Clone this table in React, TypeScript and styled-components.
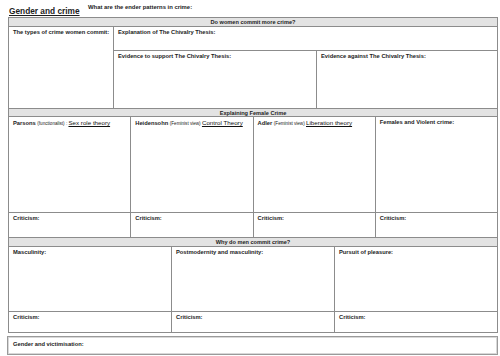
import * as React from 'react';
import styled, { createGlobalStyle } from 'styled-components';

const GlobalStyle = createGlobalStyle`
  html, body {
    margin: 0;
    padding: 0;
    background: #fff;
  }
  body {
    font-family: "Liberation Sans", Arial, sans-serif;
    color: #222;
  }
`;

const Page = styled.div`
  width: 500px;
  height: 356px;
  overflow: hidden;
  background: #fff;
`;

const TopBar = styled.header`
  display: flex;
  align-items: flex-start;
  height: 17px;
`;

const Title = styled.h1`
  margin: 0;
  padding: 7px 0 0 9px;
  width: 79px;
  font-size: 8.3px;
  line-height: 9px;
  font-weight: 700;
  text-decoration: underline;
  color: #1c1c1c;
  white-space: nowrap;
`;

const Prompt = styled.p`
  margin: 0;
  padding: 4px 0 0 0;
  font-size: 5.9px;
  line-height: 6px;
  font-weight: 700;
  color: #222;
  white-space: nowrap;
`;

const Sheet = styled.main`
  margin-left: 8px;
  width: 490px;
  box-sizing: border-box;
  border: 1px solid #8c8c8c;
  background: #8c8c8c;
  display: flex;
  flex-direction: column;
  gap: 1px;
`;

const Band = styled.div<{ $h: number }>`
  height: ${(p) => p.$h}px;
  background: #e3e3e3;
  display: flex;
  align-items: center;
  justify-content: center;
  font-size: 5.6px;
  font-weight: 700;
  color: #222;
`;

const Grid = styled.div<{ $cols: string; $rows: string }>`
  display: grid;
  grid-template-columns: ${(p) => p.$cols};
  grid-template-rows: ${(p) => p.$rows};
  gap: 1px;
`;

const Cell = styled.div<{ $span?: string; $rowSpan?: string }>`
  background: #fff;
  padding: 2px 0 0 4px;
  font-size: 5.75px;
  line-height: 7px;
  font-weight: 700;
  color: #222;
  white-space: nowrap;
  overflow: hidden;
  ${(p) => (p.$span ? `grid-column: ${p.$span};` : '')}
  ${(p) => (p.$rowSpan ? `grid-row: ${p.$rowSpan};` : '')}
`;

const Note = styled.span`
  font-size: 4.6px;
  font-weight: 400;
`;

const Theory = styled.span`
  font-size: 6.2px;
  font-weight: 400;
  text-decoration: underline;
  color: #111;
`;

const Footer = styled.div`
  margin: 3px 0 0 7px;
  width: 491px;
  height: 19px;
  box-sizing: border-box;
  border: 1px solid #9a9a9a;
  box-shadow: inset 0 0 0 1px #d8d8d8;
  padding: 4px 0 0 5px;
  font-size: 5.75px;
  line-height: 7px;
  font-weight: 700;
  color: #222;
`;

const femaleTheories = [
  { name: 'Parsons', note: '(functionalist) : ', theory: 'Sex role theory' },
  { name: 'Heidensohn', note: '(Feminist view) ', theory: 'Control Theory' },
  { name: 'Adler', note: '(Feminist view) ', theory: 'Liberation theory' },
];

const maleTheories = ['Masculinity:', 'Postmodernity and masculinity:', 'Pursuit of pleasure:'];

export default function App() {
  return (
    <Page>
      <GlobalStyle />
      <TopBar>
        <Title>Gender and crime</Title>
        <Prompt>What are the ender patterns in crime:</Prompt>
      </TopBar>

      <Sheet>
        <Band $h={8}>Do women commit more crime?</Band>
        <Grid $cols="104px 202px 1fr" $rows="23px 57px">
          <Cell $rowSpan="1 / 3">The types of crime women commit:</Cell>
          <Cell $span="2 / 4">Explanation of The Chivalry Thesis:</Cell>
          <Cell>Evidence to support The Chivalry Thesis:</Cell>
          <Cell>Evidence against The Chivalry Thesis:</Cell>
        </Grid>

        <Band $h={7}>Explaining Female Crime</Band>
        <Grid $cols="repeat(4, 1fr)" $rows="95px 24px">
          {femaleTheories.map((t) => (
            <Cell key={t.name}>
              {t.name} <Note>{t.note}</Note>
              <Theory>{t.theory}</Theory>
            </Cell>
          ))}
          <Cell>Females and Violent crime:</Cell>
          {[0, 1, 2, 3].map((i) => (
            <Cell key={i}>Criticism:</Cell>
          ))}
        </Grid>

        <Band $h={8}>Why do men commit crime?</Band>
        <Grid $cols="repeat(3, 1fr)" $rows="64px 20px">
          {maleTheories.map((t) => (
            <Cell key={t}>{t}</Cell>
          ))}
          {[0, 1, 2].map((i) => (
            <Cell key={i}>Criticism:</Cell>
          ))}
        </Grid>
      </Sheet>

      <Footer>Gender and victimisation:</Footer>
    </Page>
  );
}
